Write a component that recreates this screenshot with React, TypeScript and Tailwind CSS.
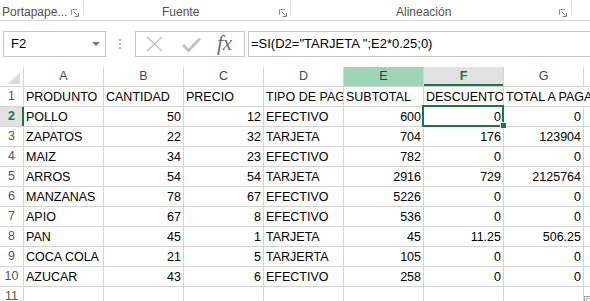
import React from "react";

const GREEN = "#217346";

const cols = ["A", "B", "C", "D", "E", "F", "G"];

type Cell = { v: string; n?: boolean };
const rows: (string | number)[][] = [
  ["PRODUNTO", "CANTIDAD", "PRECIO", "TIPO DE PAGO", "SUBTOTAL", "DESCUENTO", "TOTAL A PAGAR"],
  ["POLLO", 50, 12, "EFECTIVO", 600, 0, 0],
  ["ZAPATOS", 22, 32, "TARJETA", 704, 176, 123904],
  ["MAIZ", 34, 23, "EFECTIVO", 782, 0, 0],
  ["ARROS", 54, 54, "TARJETA", 2916, 729, 2125764],
  ["MANZANAS", 78, 67, "EFECTIVO", 5226, 0, 0],
  ["APIO", 67, 8, "EFECTIVO", 536, 0, 0],
  ["PAN", 45, 1, "TARJETA", 45, "11.25", "506.25"],
  ["COCA COLA", 21, 5, "TARJERTA", 105, 0, 0],
  ["AZUCAR", 43, 6, "EFECTIVO", 258, 0, 0],
  ["", "", "", "", "", "", ""],
];

function Launcher() {
  return (
    <svg width="8" height="8" viewBox="0 0 8 8" className="shrink-0">
      <path d="M0.5 6 V0.5 H6" fill="none" stroke="#9a9a9a" strokeWidth="1" />
      <path d="M2.5 2.5 L6.5 6.5" stroke="#7a7a7a" strokeWidth="1" />
      <path d="M3.5 7.5 H7.5 V3.5" fill="none" stroke="#7a7a7a" strokeWidth="1" />
    </svg>
  );
}

function Sep() {
  return <div className="w-px h-[15px] bg-[#e1e1e1] shrink-0" />;
}

export default function App() {
  return (
    <div className="w-[590px] h-[301px] overflow-hidden bg-white relative font-['Liberation_Sans',Arial,sans-serif] text-black">
      {/* Ribbon group labels */}
      <div className="h-[21px] border-b border-[#d5d5d5] flex items-start text-[12px] text-[#505050]">
        <div className="w-[83px] flex items-start shrink-0">
          <span className="mt-[5px] ml-[2px] leading-[14px] whitespace-nowrap">Portapape...</span>
          <div className="mt-[9px] ml-auto mr-[4px]">
            <Launcher />
          </div>
        </div>
        <Sep />
        <div className="w-[206px] flex items-start shrink-0">
          <span className="mt-[5px] ml-[78px] leading-[14px]">Fuente</span>
          <div className="mt-[9px] ml-auto mr-[3px]">
            <Launcher />
          </div>
        </div>
        <Sep />
        <div className="w-[280px] flex items-start shrink-0">
          <span className="mt-[5px] ml-[105px] leading-[14px]">Alineación</span>
          <div className="mt-[9px] ml-auto mr-[4px]">
            <Launcher />
          </div>
        </div>
        <Sep />
      </div>

      {/* Formula bar */}
      <div className="mt-[10px] h-[26px] flex items-stretch">
        <div className="ml-[3px] w-[103px] border border-[#c6c6c6] flex items-center justify-between pl-[7px] pr-[5px] text-[13px] shrink-0">
          <span>F2</span>
          <svg width="8" height="4" viewBox="0 0 8 4">
            <path d="M0 0 H8 L4 4 Z" fill="#7a7a7a" />
          </svg>
        </div>
        <div className="ml-[13px] w-[2px] flex flex-col justify-center gap-[2px] shrink-0">
          <div className="w-[2px] h-[2px] bg-[#b5b5b5]" />
          <div className="w-[2px] h-[2px] bg-[#b5b5b5]" />
          <div className="w-[2px] h-[2px] bg-[#b5b5b5]" />
        </div>
        <div className="ml-[14px] w-[110px] border border-[#c6c6c6] flex items-center shrink-0">
          <svg width="17" height="16" viewBox="0 0 17 16" className="ml-[10px]">
            <path d="M1 1 L16 15 M16 1 L1 15" stroke="#c2c2c2" strokeWidth="1.6" />
          </svg>
          <svg width="19" height="15" viewBox="0 0 19 15" className="ml-[19px]">
            <path d="M1 8 L6.5 13.5 L18 1.5" fill="none" stroke="#c2c2c2" strokeWidth="3" />
          </svg>
          <span className="ml-[16px] font-['Liberation_Serif',serif] italic text-[21px] leading-none text-[#6b6b6b] -mt-[2px]">
            fx
          </span>
        </div>
        <div className="ml-[3px] flex-1 border border-r-0 border-[#c6c6c6] flex items-center pl-[2px] text-[13px] whitespace-nowrap">
          =SI(D2="TARJETA ";E2*0.25;0)
        </div>
      </div>

      {/* Grid */}
      <div className="mt-[10px] text-[12.5px]">
        {/* column headers */}
        <div className="h-[20px] flex border-b border-[#d4d4d4]">
          <div className="w-[24px] shrink-0 border-r border-[#d4d4d4] relative">
            <svg width="14" height="11" viewBox="0 0 14 11" className="absolute left-[7px] top-[6px]">
              <path d="M13 0 L13 11 L0 11 Z" fill="#dcdcdc" />
            </svg>
          </div>
          {cols.map((c) => {
            const isE = c === "E";
            const isF = c === "F";
            return (
              <div
                key={c}
                className={
                  "w-[80px] shrink-0 border-r border-[#d4d4d4] flex items-center justify-center " +
                  (isE ? "bg-[#9fd5b7] text-[#3a3a3a] " : "") +
                  (isF ? "bg-[#e1e1e1] font-bold text-[#217346] shadow-[inset_0_-2px_0_#217346] " : "") +
                  (!isE && !isF ? "text-[#474747]" : "")
                }
              >
                {c}
              </div>
            );
          })}
          <div className="flex-1" />
        </div>

        {rows.map((r, ri) => {
          const rn = ri + 1;
          const sel = rn === 2;
          return (
            <div key={ri} className="h-[20px] flex border-b border-[#d4d4d4]">
              <div
                className={
                  "w-[24px] shrink-0 flex items-center justify-center " +
                  (sel
                    ? "bg-[#e1e1e1] text-[#217346] font-bold border-r-2 border-[#217346] pl-[1px]"
                    : "border-r border-[#d4d4d4] text-[#555]")
                }
              >
                {rn}
              </div>
              {r.map((v, ci) => {
                const isNum = typeof v === "number" || (typeof v === "string" && /^[0-9.]+$/.test(v));
                const isSel = rn === 2 && ci === 5;
                const overflow = rn === 1 && ci === 6;
                return (
                  <div
                    key={ci}
                    className={
                      "w-[80px] shrink-0 border-r flex items-center pt-[1px] whitespace-nowrap relative " +
                      (overflow ? "border-white overflow-visible " : "border-[#d4d4d4] overflow-hidden ") +
                      (isNum ? "justify-end pr-[2px]" : "justify-start pl-[2px]")
                    }
                  >
                    {String(v)}
                  </div>
                );
              })}
              <div className="flex-1" />
            </div>
          );
        })}
      </div>

      {/* selection overlay on F2 */}
      <div className="absolute left-[422px] top-[105px] w-[82px] h-[22px] border-2 border-[#217346] pointer-events-none" />
      <div className="absolute left-[500px] top-[122px] w-[7px] h-[7px] bg-[#217346] border border-white pointer-events-none" />

      {/* quick analysis button partially visible */}
      <div className="absolute left-[584px] top-[296px] w-[12px] h-[12px] border border-[#9a9a9a] bg-white">
        <div className="m-[1px] w-[8px] h-[8px] border border-[#b0b0b0]" />
      </div>
    </div>
  );
}
